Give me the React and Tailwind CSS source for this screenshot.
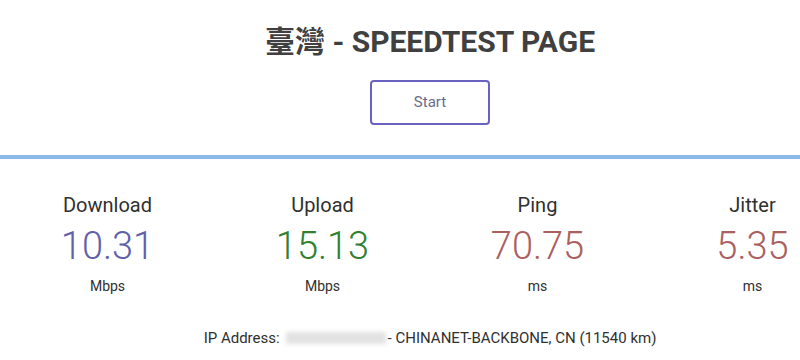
import React from 'react';

const stats = [
  { label: 'Download', value: '10.31', unit: 'Mbps', color: 'text-[#6060aa]' },
  { label: 'Upload', value: '15.13', unit: 'Mbps', color: 'text-[#308030]' },
  { label: 'Ping', value: '70.75', unit: 'ms', color: 'text-[#aa6060]' },
  { label: 'Jitter', value: '5.35', unit: 'ms', color: 'text-[#aa6060]' },
];

const App = () => {
  return (
    <div className="w-[800px] h-[360px] overflow-hidden bg-white font-['Roboto','Noto_Sans_CJK_TC',sans-serif] text-[#202020]">
      <div className="w-[860px]">
        <h1 className="pt-[22px] text-center text-[30px] leading-[40px] font-bold text-[#404040]">
          臺灣 - SPEEDTEST PAGE
        </h1>
        <div className="flex justify-center mt-[18px]">
          <button className="w-[120px] h-[45px] rounded-[4px] border-2 border-[#6a62c0] text-[15px] text-[#6a6a90]">
            Start
          </button>
        </div>
        <div className="mt-[30px] h-[4px] bg-[#8cb8e8]" />
        <div className="grid grid-cols-4 mt-[34px]">
          {stats.map((s) => (
            <div key={s.label} className="flex flex-col items-center">
              <div className="text-[20px] leading-[24px] text-[#303030]">{s.label}</div>
              <div className={`text-[38px] leading-[46px] mt-[6px] font-light ${s.color}`}>{s.value}</div>
              <div className="text-[14px] leading-[18px] mt-[8px] text-[#303030]">{s.unit}</div>
            </div>
          ))}
        </div>
        <div className="mt-[34px] flex justify-center items-center text-[15px] leading-[18px] text-[#303030]">
          <span>IP Address: </span>
          <span className="ml-[6px] mr-[2px] w-[100px] h-[12px] bg-[#e2e2e2] blur-[2px]" />
          <span>- CHINANET-BACKBONE, CN (11540 km)</span>
        </div>
      </div>
    </div>
  );
};

export default App;
